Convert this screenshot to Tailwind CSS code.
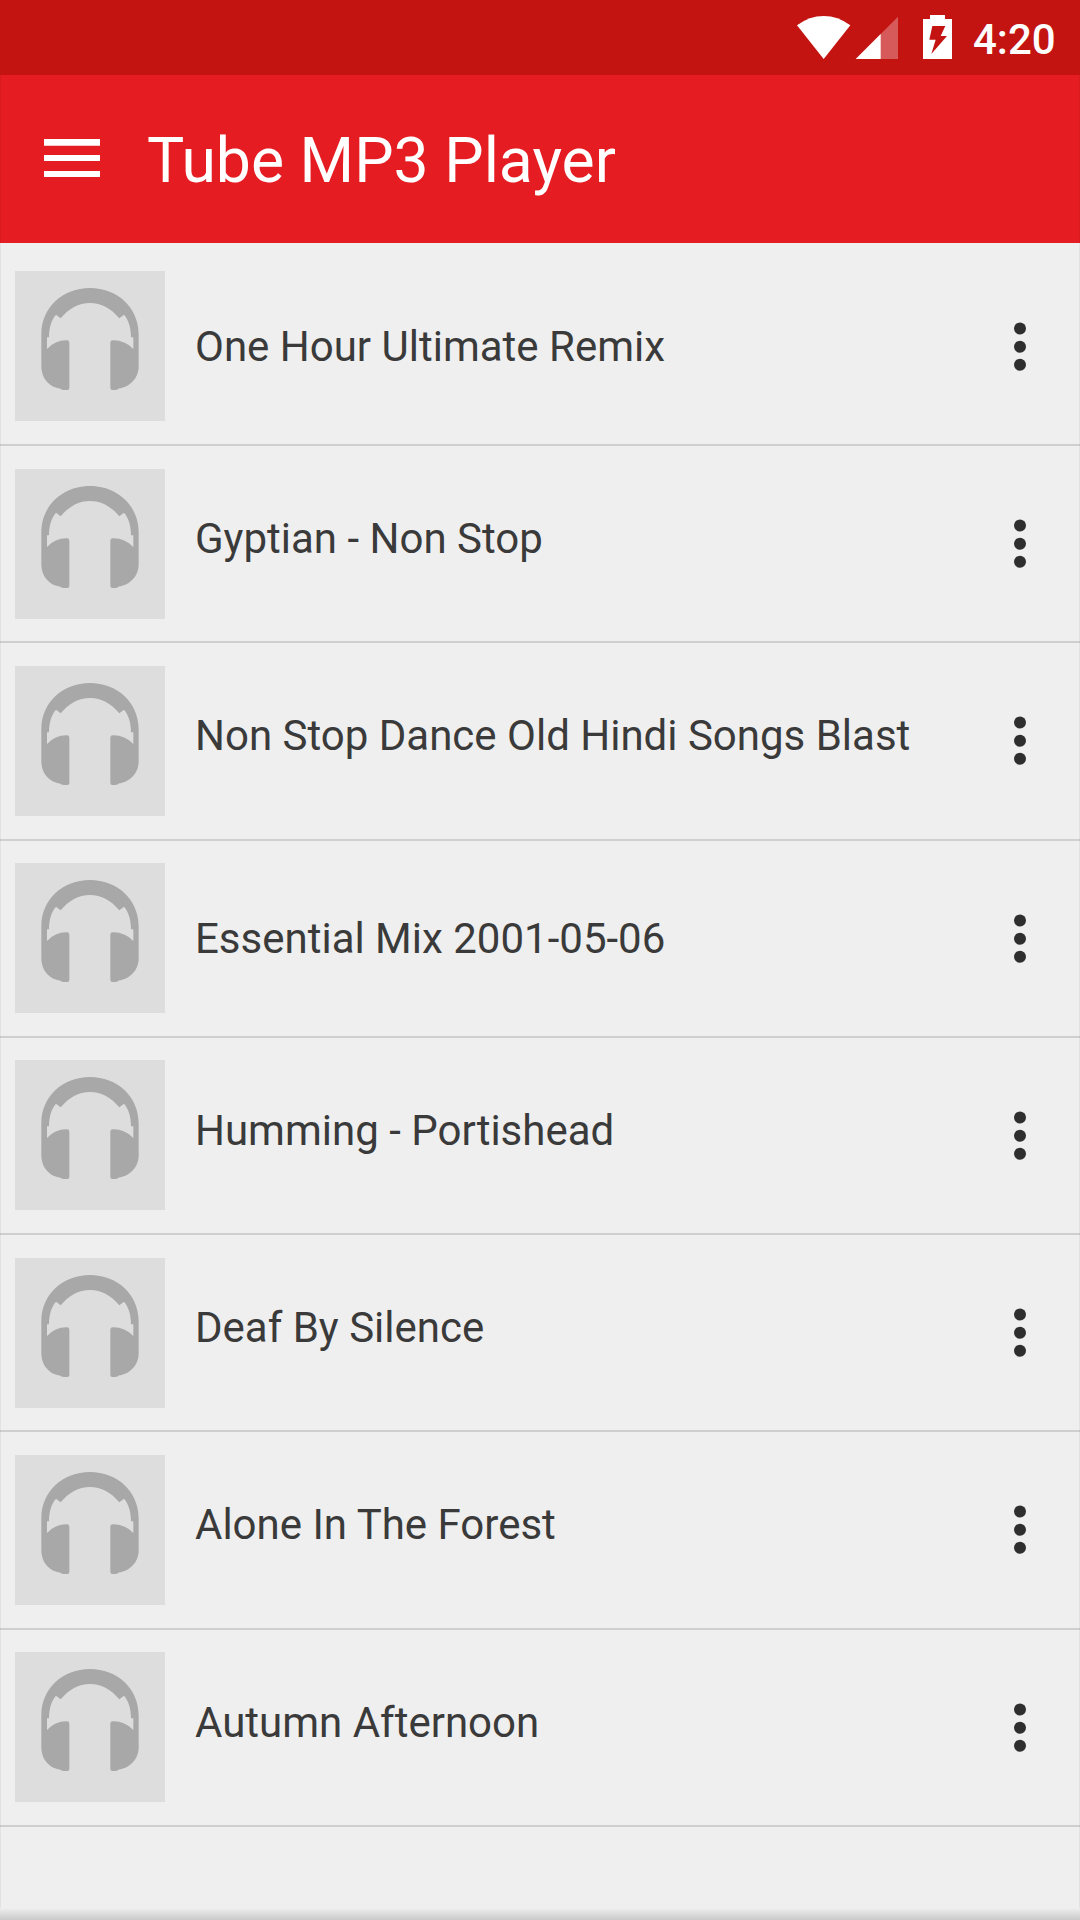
<!DOCTYPE html>
<html lang="en">
<head>
<meta charset="utf-8">
<title>Tube MP3 Player</title>
<script src="https://cdn.jsdelivr.net/npm/@tailwindcss/browser@4"></script>
</head>
<body class="bg-[#efefef]">
<div class="relative flex h-[1920px] w-[1080px] flex-col overflow-hidden bg-[#efefef] font-['Roboto',sans-serif]">
  <!-- Status bar -->
  <div class="flex h-[75px] shrink-0 items-start bg-[#c31412] text-white">
    <svg class="ml-[780px] h-[75px] w-[180px] shrink-0" viewBox="0 0 540 225" fill="#fff">
      <path d="M51 76Q88 48 131 48T211 76L131 177Z"/>
      <path d="M354 50V177H227Z" opacity=".3"/>
      <path d="M302 102V177H227Z"/>
      <path fill-rule="evenodd" d="M450 45H495V57H516V177H429V57H450ZM457 78H496L482 108H501L454 162L467 119H448Z"/>
    </svg>
    <div class="ml-[13px] pt-[15px] text-[42px] leading-[50px] font-medium">4:20</div>
  </div>
  <!-- App bar -->
  <div class="flex h-[168px] shrink-0 items-start bg-[#e61c23] text-white">
    <svg class="mt-[64px] ml-[44px] h-[38px] w-[56px]" viewBox="0 0 56 38" fill="#fff"><path d="M0 0H56V6.7H0ZM0 16H56V22H0ZM0 32H56V38H0Z"/></svg>
    <h1 class="ml-[47px] pt-[50px] text-[62.5px] leading-[72px] whitespace-nowrap">Tube MP3 Player</h1>
  </div>
  <!-- Track list -->
  <ul id="tracks" class="flex flex-col pt-[5.75px] text-[#3a3a3a]"></ul>
  <div class="pointer-events-none absolute inset-x-0 top-[75px] bottom-0 border-x border-black/5"></div>
  <div class="absolute inset-x-0 bottom-0 h-[12px] bg-linear-to-b from-[#efefef] to-[#c9c9c9]"></div>
</div>
<template id="row">
  <li class="flex h-[197.25px] shrink-0 items-center border-b-2 border-[#cfcfcf] pl-[15px]">
    <svg class="h-[150px] w-[150px] shrink-0 bg-[#dddddd]" viewBox="45 65 450 450" fill="#a8a8a8">
      <path d="M124 255C124 174 189 116 270 116S416 174 416 255V350C416 395 379 415 358 417Q354 422 345 422H337Q331 422 331 416V280Q331 273 338 273Q374 272 400 299V264H393C393 236 386 212 372 196L358 207C334 178 304 161 270 161S206 178 182 207L168 196C154 212 147 236 147 264H141V299Q166 272 201 273Q208 273 208 280V416Q208 422 202 422H190Q182 420 178 417C157 415 124 395 124 350Z"/>
    </svg>
    <span class="ml-[30px] flex-1 text-[42px] leading-[50px] whitespace-nowrap"></span>
    <svg class="mr-[54px] h-[49px] w-[12px] shrink-0" viewBox="0 0 12 49" fill="#2e2e2e"><circle cx="6" cy="6.5" r="6"/><circle cx="6" cy="24.7" r="6"/><circle cx="6" cy="42.8" r="6"/></svg>
  </li>
</template>
<script>
  const tracks = ["One Hour Ultimate Remix", "Gyptian - Non Stop", "Non Stop Dance Old Hindi Songs Blast", "Essential Mix 2001-05-06", "Humming - Portishead", "Deaf By Silence", "Alone In The Forest", "Autumn Afternoon"];
  const list = document.getElementById("tracks");
  tracks.forEach((name, i) => {
    const row = document.getElementById("row").content.cloneNode(true);
    const label = row.querySelector("span");
    label.textContent = name;
    label.classList.add(i === 0 || i === 3 ? "pt-[2px]" : "pb-[9px]");
    list.append(row);
  });
</script>
</body>
</html>
